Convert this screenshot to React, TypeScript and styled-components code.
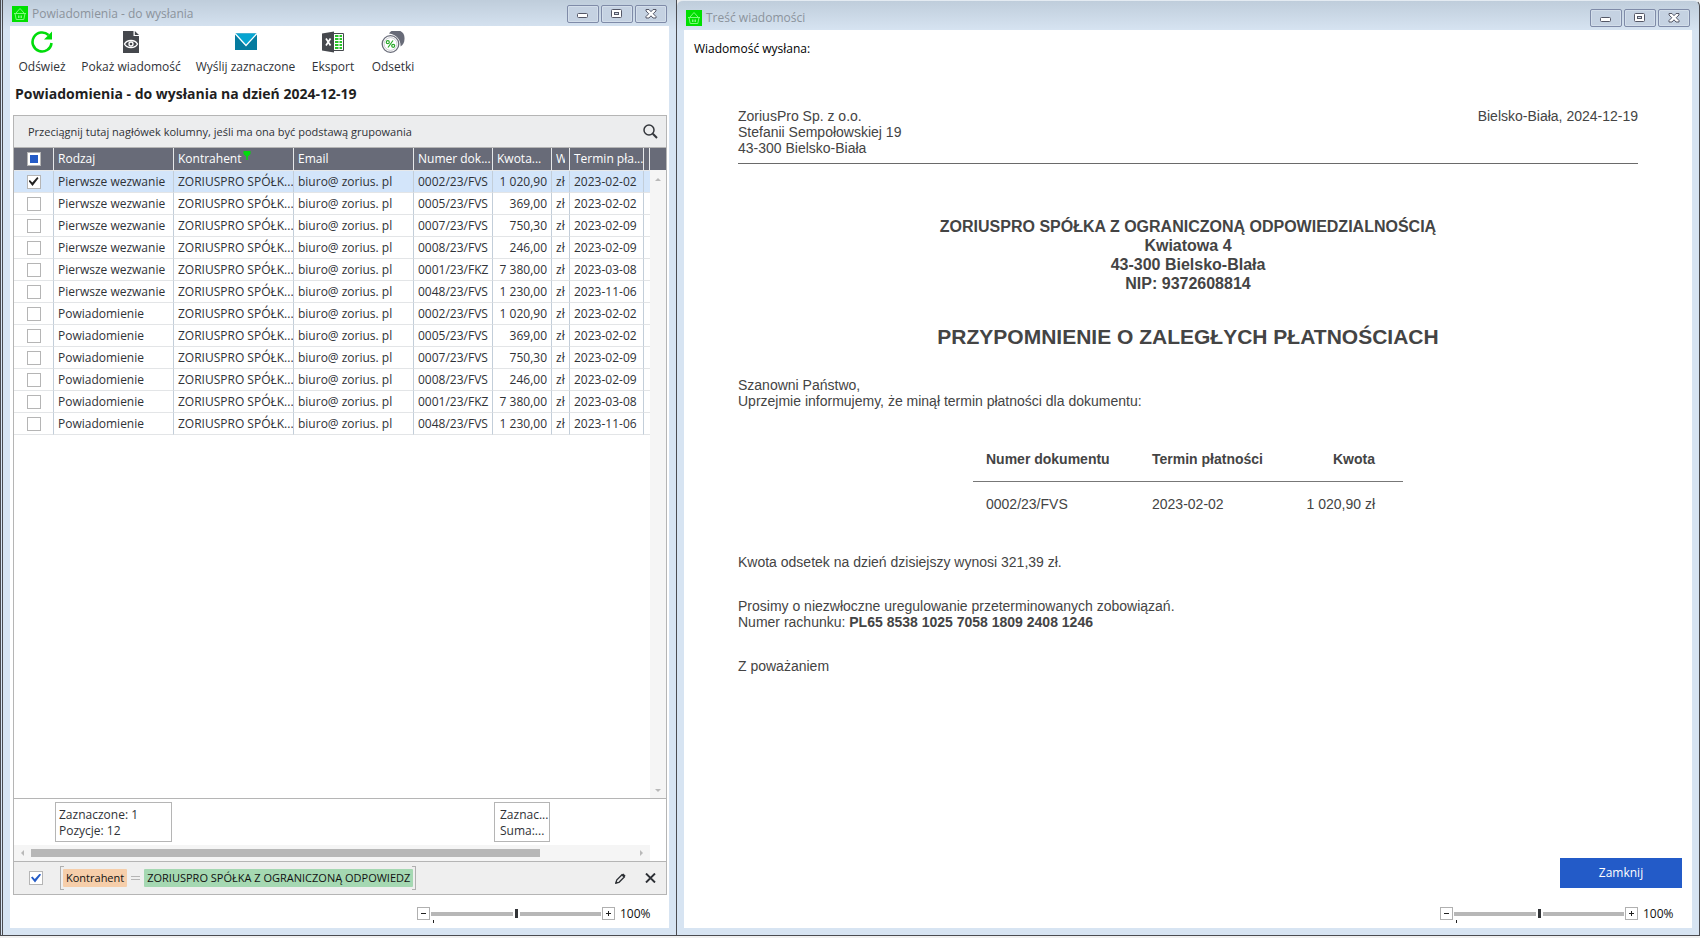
import React, { useEffect, useRef, useState } from 'react';
import styled, { createGlobalStyle, css } from 'styled-components';

const GlobalStyle = createGlobalStyle`
  *, *::before, *::after { box-sizing: border-box; }
  html, body { margin: 0; background: #f0f0f0; }
  body, button, input, table {
    font-family: "Open Sans", "Noto Sans", sans-serif;
    font-size: 12px;
    line-height: 16px;
    color: #2f3237;
  }
  button { padding: 0; border: 0; background: none; }
  p, h1, h2 { margin: 0; }
  svg { display: block; }
`;

const Desktop = styled.main`
  display: grid;
  grid-template-columns: minmax(0, 677fr) minmax(0, 1023fr);
  min-height: 100vh;
  padding-bottom: 2px;
  background: #f0f0f0;
`;

const Window = styled.section<{ $first?: boolean }>`
  display: flex;
  flex-direction: column;
  min-width: 0;
  padding: 0 7px 7px;
  border-bottom: 1px solid #4a4b50;
  border-right: 1px solid #4a4b50;
  background: linear-gradient(#bfcddb 0, #d7e4f2 30px);
  ${(p) =>
    p.$first
      ? css`
          border-left: 3px double #4a4b50;
        `
      : css`
          border-top: 1px solid #e4ebf2;
          border-top-left-radius: 6px;
          border-top-right-radius: 6px;
        `}
`;

const TitleBar = styled.header<{ $tall?: boolean }>`
  display: flex;
  align-items: center;
  gap: 4px;
  height: ${(p) => (p.$tall ? 29 : 26)}px;
  padding: ${(p) => (p.$tall ? '5px 2px 0' : '2px 2px 0')};
`;

const Title = styled.span`
  flex: 1;
  color: #8b939c;
`;

const WindowButtons = styled.div`
  display: flex;
  gap: 2px;
`;

const WindowButton = styled.button`
  display: grid;
  place-items: center;
  width: 32px;
  height: 18px;
  border: 1px solid #7f8ba8;
  border-radius: 2px;
  background: #c5d2e2;
  box-shadow: inset 0 0 0 1px #d3deea;
`;

const Client = styled.div`
  display: flex;
  flex: 1;
  flex-direction: column;
  background: #fff;
`;

const Toolbar = styled.nav`
  display: flex;
  gap: 20px;
  padding: 5px 10px 0;
`;

const ToolButton = styled.button<{ $width: number }>`
  display: flex;
  flex-direction: column;
  align-items: center;
  gap: 6px;
  width: ${(p) => p.$width}px;
  white-space: nowrap;
`;

const Heading = styled.h1`
  padding: 11px 5px 13px;
  font-size: 14px;
  line-height: 16px;
  color: #1f1f1f;
`;

const GridPanel = styled.div`
  display: flex;
  flex: 1;
  flex-direction: column;
  margin: 0 2px 0 3px;
  border: 1px solid #b5b5b5;
`;

const GroupPanel = styled.div`
  display: flex;
  align-items: center;
  justify-content: space-between;
  height: 32px;
  padding: 0 8px 0 14px;
  border-bottom: 1px solid #b5b5b5;
  background: #ecedee;
  font-size: 11px;
`;

const GridBody = styled.div`
  display: grid;
  grid-template-columns: minmax(0, 1fr) 16px;
  flex: 1;
`;

const Table = styled.table`
  width: 100%;
  align-self: start;
  table-layout: fixed;
  border-collapse: separate;
  border-spacing: 0;
`;

const HeadCell = styled.th<{ $check?: boolean }>`
  height: 23px;
  padding: ${(p) => (p.$check ? '0' : '0 0 0 4px')};
  border-right: 1px solid #e6e8ea;
  border-bottom: 1px solid #e6e8ea;
  background: #686b78;
  color: #fff;
  font-weight: 400;
  text-align: left;
  white-space: nowrap;
  overflow: hidden;
`;

const HeadLabel = styled.span`
  display: flex;
  gap: 1px;
  margin-right: 4px;
  overflow: hidden;
`;

const Row = styled.tr<{ $selected?: boolean }>`
  background: ${(p) => (p.$selected ? '#d3e5fa' : '#fff')};
`;

const Cell = styled.td<{ $right?: boolean; $check?: boolean }>`
  height: 22px;
  padding: ${(p) => (p.$check ? '0' : '0 4px')};
  border-right: 1px solid #c3ced9;
  border-bottom: 1px solid #e3e5e7;
  text-align: ${(p) => (p.$right ? 'right' : 'left')};
  white-space: nowrap;
  overflow: hidden;
  &:last-child { border-right: 0; }
`;

const CheckWrap = styled.label`
  display: grid;
  place-items: center;
`;

const CheckBox = styled.input<{ $accent?: string }>`
  appearance: none;
  display: grid;
  place-items: center;
  width: 14px;
  height: 14px;
  margin: 0;
  border: 1px solid #b5b5b5;
  background: #fff;
  &:checked::after {
    content: '';
    width: 10px;
    height: 9px;
    background: ${(p) => p.$accent ?? '#222'};
    clip-path: polygon(0 45%, 14% 32%, 38% 62%, 88% 0, 100% 14%, 40% 100%);
  }
  &:indeterminate::after {
    content: '';
    width: 8px;
    height: 8px;
    background: #245bc7;
    clip-path: none;
  }
`;

const VScroll = styled.div`
  display: flex;
  flex-direction: column;
  justify-content: space-between;
  align-items: center;
  padding-bottom: 6px;
  background: #f5f5f5;
`;

const VScrollTop = styled.div`
  align-self: stretch;
  display: grid;
  justify-items: center;
  row-gap: 8px;
  &::before {
    content: '';
    width: 100%;
    height: 22px;
    background: #686b78;
  }
`;

const Arrow = styled.i<{ $dir: 'up' | 'down' | 'left' | 'right' }>`
  width: ${(p) => (p.$dir === 'up' || p.$dir === 'down' ? 6 : 3)}px;
  height: ${(p) => (p.$dir === 'up' || p.$dir === 'down' ? 3 : 6)}px;
  background: #b9b9b9;
  clip-path: ${(p) =>
    ({
      up: 'polygon(50% 0, 100% 100%, 0 100%)',
      down: 'polygon(0 0, 100% 0, 50% 100%)',
      left: 'polygon(0 50%, 100% 0, 100% 100%)',
      right: 'polygon(0 0, 100% 50%, 0 100%)',
    })[p.$dir]};
`;

const Summary = styled.div`
  display: grid;
  grid-template-columns: 117px 56px;
  column-gap: 322px;
  padding: 3px 0 3px 41px;
  border-top: 1px solid #b5b5b5;
`;

const SummaryBox = styled.div<{ $inset?: boolean }>`
  height: 40px;
  padding: ${(p) => (p.$inset ? '4px 0 2px 5px' : '4px 0 2px 3px')};
  border: 1px solid #b5b5b5;
  white-space: nowrap;
  overflow: hidden;
`;

const HScroll = styled.div`
  display: flex;
  align-items: center;
  height: 16px;
  margin-right: 16px;
  padding: 0 7px;
  background: #f5f5f5;
`;

const HThumb = styled.div`
  flex: 0 1 509px;
  height: 8px;
  margin: 0 auto 0 7px;
  background: #b7b7b7;
`;

const FilterPanel = styled.div`
  display: flex;
  align-items: center;
  height: 33px;
  padding: 0 10px 0 15px;
  border-top: 1px solid #b5b5b5;
  background: #efefef;
`;

const FilterExpression = styled.div`
  position: relative;
  display: flex;
  align-items: center;
  gap: 4px;
  height: 24px;
  margin: 0 auto 0 17px;
  padding: 0 3px;
  &::before, &::after {
    content: '';
    position: absolute;
    top: 0;
    bottom: 0;
    width: 4px;
    border: 1px solid #b0b0b0;
  }
  &::before { left: 0; border-right: 0; }
  &::after { right: 0; border-left: 0; }
`;

const Chip = styled.span<{ $tone: string }>`
  height: 18px;
  padding: 1px 3px;
  border-radius: 1px;
  background: ${(p) => p.$tone};
  color: #111;
  font-size: 11px;
  white-space: nowrap;
`;

const Equals = styled.i`
  width: 9px;
  height: 4px;
  border: solid #b5b5b5;
  border-width: 1px 0;
`;

const FilterActions = styled.div`
  display: flex;
  align-items: center;
  gap: 19px;
`;

const ZoomRow = styled.footer`
  display: flex;
  align-items: center;
  justify-content: flex-end;
  height: 33px;
  padding: 4px 20px 0 0;
`;

const ZoomButton = styled.button`
  display: grid;
  place-items: center;
  width: 13px;
  height: 13px;
  border: 1px solid #b0b0b0;
`;

const ZoomTrack = styled.label`
  position: relative;
  display: flex;
  width: 172px;
  padding: 0 1px;
  &::after {
    content: '';
    position: absolute;
    left: 3px;
    top: 13px;
    width: 1px;
    height: 3px;
    background: #222;
  }
`;

const Range = styled.input`
  appearance: none;
  width: 100%;
  height: 13px;
  margin: 0;
  background: linear-gradient(#b7b7b7, #b7b7b7) center / 100% 4px no-repeat;
  &::-webkit-slider-thumb {
    appearance: none;
    width: 3px;
    height: 9px;
    background: #333538;
    box-shadow: 0 0 0 2px #fff;
  }
`;

const ZoomValue = styled.output`
  width: 29px;
  margin-left: 5px;
  color: #111;
  white-space: nowrap;
`;

const Status = styled.p`
  padding: 11px 10px 0;
  color: #000;
`;

const Letter = styled.article`
  flex: 1;
  padding: 51px 54px 0;
  font: 14px/16px "Liberation Sans", Arial, sans-serif;
  color: #444;
`;

const LetterHead = styled.div`
  display: flex;
  justify-content: space-between;
  padding-bottom: 7px;
  border-bottom: 1px solid #6a6a6a;
`;

const Recipient = styled.p`
  margin-top: 53px;
  font-size: 16px;
  line-height: 19px;
  font-weight: 700;
  text-align: center;
`;

const LetterTitle = styled.h2`
  margin: 32px 0 28px;
  font-size: 21px;
  line-height: 24px;
  text-align: center;
`;

const Paragraph = styled.p`
  margin-bottom: 28px;
`;

const DebtTable = styled.table`
  width: 430px;
  margin: 0 auto 28px;
  table-layout: fixed;
  border-collapse: collapse;
  font: inherit;
  color: inherit;
  th, td {
    height: 45px;
    padding: 0 0 0 13px;
    text-align: left;
  }
  th {
    height: 44px;
    border-bottom: 1px solid #777;
  }
  th:last-child, td:last-child {
    padding: 0 28px 0 0;
    text-align: right;
  }
`;

const ActionRow = styled.div`
  display: flex;
  justify-content: flex-end;
  padding: 0 10px 7px;
`;

const CloseButton = styled.button`
  width: 122px;
  height: 30px;
  background: #235bc8;
  color: #fff;
`;

const BasketIcon = () => (
  <svg width="16" height="16" viewBox="0 0 16 16" aria-hidden="true">
    <rect width="16" height="16" fill="#00e000" />
    <g fill="none" stroke="#7dfa7d" strokeWidth="1">
      <path d="M2 7.5h12M3 7.5l1.2 6h7.6l1.2-6M4 7l4-4.5L12 7M6.5 9.5v2.5M8 9.5v2.5M9.5 9.5v2.5" />
    </g>
  </svg>
);

const MinimizeIcon = () => (
  <svg width="12" height="12" viewBox="0 0 12 12" aria-hidden="true">
    <rect x="0.5" y="5.5" width="10" height="4" rx="1" fill="#fff" stroke="#545766" />
  </svg>
);

const MaximizeIcon = () => (
  <svg width="12" height="12" viewBox="0 0 12 12" aria-hidden="true">
    <rect x="0.5" y="1.5" width="10" height="8" rx="1" fill="#fff" stroke="#545766" />
    <rect x="3.5" y="4.5" width="4" height="2" fill="#d0dae6" stroke="#545766" />
  </svg>
);

const CloseIcon = () => (
  <svg width="12" height="12" viewBox="0 0 12 12" aria-hidden="true">
    <path
      d="M1 1.5h3L6 3.7l2-2.2h3v1.5L8.2 5.7 11 8.5V10H8L6 7.8 4 10H1V8.5l2.800-2.800L1 3z"
      fill="#fff"
      stroke="#545766"
    />
  </svg>
);

const RefreshIcon = () => (
  <svg width="22" height="22" viewBox="0 0 22 22" aria-hidden="true">
    <path d="M20.5 12A9.500 9.500 0 1 1 17.500 4" fill="none" stroke="#00dc0a" strokeWidth="2.6" />
    <path d="M21 0.5v8h-8z" fill="#00dc0a" />
  </svg>
);

const PreviewIcon = () => (
  <svg width="22" height="22" viewBox="0 0 22 22" aria-hidden="true">
    <path d="M3 0h10.500v5H19v17H3z" fill="#45484d" />
    <path d="M14.800 0L19 4h-4.200z" fill="#45484d" />
    <path d="M4.500 13c2.500-4.700 10.500-4.700 13 0-2.500 4.700-10.500 4.700-13 0z" fill="none" stroke="#fff" strokeWidth="1.4" />
    <circle cx="11" cy="13" r="2" fill="none" stroke="#fff" strokeWidth="1.3" />
  </svg>
);

const MailIcon = () => (
  <svg width="22" height="22" viewBox="0 0 22 22" aria-hidden="true">
    <path d="M0 2.500h22v16.500H0z" fill="#057b9f" />
    <path d="M0 2.500h22L11 14z" fill="#06a5d1" />
    <path d="M0 2.500l11 12 11-12" fill="none" stroke="#fff" strokeWidth="1.3" />
  </svg>
);

const ExcelIcon = () => (
  <svg width="22" height="22" viewBox="0 0 22 22" aria-hidden="true">
    <path d="M11 2.500h10.500v17H11" fill="#fff" stroke="#45484d" />
    <path d="M0 2.500L12 0.500v21L0 19.500z" fill="#45484d" />
    <path d="M4 7.500l4.500 7M8.500 7.500l-4.500 7" stroke="#fff" strokeWidth="1.7" fill="none" />
    <path
      d="M13 5h3.500M17.500 5H20M13 8h3.500M17.500 8H20M13 11h3.500M17.500 11H20M13 14h3.500M17.500 14H20M13 17h3.500M17.500 17H20"
      stroke="#2ac42a"
      strokeWidth="2"
    />
  </svg>
);

const InterestIcon = () => (
  <svg width="24" height="22" viewBox="0 0 24 22" aria-hidden="true">
    <path d="M8 2.600A8.500 8.500 0 0 1 23.500 8c0 3.500-1.500 6-4 7.600.6-5.800-3.500-12-11.500-13z" fill="#686b78" />
    <circle cx="9.500" cy="13" r="8.300" fill="#fff" stroke="#686b78" strokeWidth="1.300" />
    <circle cx="9.500" cy="13" r="6.400" fill="none" stroke="#b5b7be" strokeWidth="0.700" />
    <g fill="none" stroke="#27a827" strokeWidth="1.200">
      <path d="M12 9.500L7 16.500" />
      <circle cx="6.800" cy="11.200" r="1.500" />
      <circle cx="12.200" cy="14.800" r="1.500" />
    </g>
  </svg>
);

const SearchIcon = () => (
  <svg width="15" height="15" viewBox="0 0 15 15" fill="none" stroke="#34373c" aria-hidden="true">
    <circle cx="6" cy="6" r="5" strokeWidth="1.5" />
    <path d="M9.800 9.800l4.200 4.200" strokeWidth="2" />
  </svg>
);

const FilterIcon = () => (
  <svg width="8" height="9" viewBox="0 0 8 9" aria-hidden="true">
    <path d="M0.500 0h7v3L4.800 5.500V9H3.300V5.500L0.500 3z" fill="#00dc0a" />
  </svg>
);

const PencilIcon = () => (
  <svg width="11" height="11" viewBox="0 0 11 11" aria-hidden="true">
    <path d="M1 10l.7-3L7 1.700l2.300 2.300L4 9.300z" fill="none" stroke="#2d3035" strokeWidth="1.3" />
    <path d="M6.500 2L8.300.4l2.300 2.300L9 4.500z" fill="#2d3035" />
    <path d="M0 11l1-3 2 2z" fill="#2d3035" />
  </svg>
);

const CrossIcon = () => (
  <svg width="11" height="10" viewBox="0 0 11 10" aria-hidden="true">
    <path d="M1 .5l9 9M10 .5l-9 9" stroke="#2d3035" strokeWidth="1.9" />
  </svg>
);

const MinusIcon = () => (
  <svg width="7" height="7" viewBox="0 0 7 7" aria-hidden="true">
    <path d="M1 3.500h5" stroke="#222" />
  </svg>
);

const PlusIcon = () => (
  <svg width="7" height="7" viewBox="0 0 7 7" aria-hidden="true">
    <path d="M1 3.500h5M3.500 1v5" stroke="#222" />
  </svg>
);

const WindowTitle = ({ text, tall }: { text: string; tall?: boolean }) => (
  <TitleBar $tall={tall}>
    <BasketIcon />
    <Title>{text}</Title>
    <WindowButtons>
      <WindowButton aria-label="Minimalizuj"><MinimizeIcon /></WindowButton>
      <WindowButton aria-label="Maksymalizuj"><MaximizeIcon /></WindowButton>
      <WindowButton aria-label="Zamknij okno"><CloseIcon /></WindowButton>
    </WindowButtons>
  </TitleBar>
);

const ZoomBar = () => {
  const [level, setLevel] = useState(100);
  return (
    <ZoomRow>
      <ZoomButton aria-label="Pomniejsz" onClick={() => setLevel(Math.max(0, level - 10))}><MinusIcon /></ZoomButton>
      <ZoomTrack>
        <Range
          type="range"
          aria-label="Powiększenie"
          min={0}
          max={200}
          value={level}
          onChange={(e) => setLevel(Number(e.target.value))}
        />
      </ZoomTrack>
      <ZoomButton aria-label="Powiększ" onClick={() => setLevel(Math.min(200, level + 10))}><PlusIcon /></ZoomButton>
      <ZoomValue>{level}%</ZoomValue>
    </ZoomRow>
  );
};

const tools = [
  { label: 'Odśwież', width: 44, Icon: RefreshIcon },
  { label: 'Pokaż wiadomość', width: 94, Icon: PreviewIcon },
  { label: 'Wyślij zaznaczone', width: 95, Icon: MailIcon },
  { label: 'Eksport', width: 40, Icon: ExcelIcon },
  { label: 'Odsetki', width: 40, Icon: InterestIcon },
];

const documents = [
  ['0002/23/FVS', '1 020,90', '2023-02-02'],
  ['0005/23/FVS', '369,00', '2023-02-02'],
  ['0007/23/FVS', '750,30', '2023-02-09'],
  ['0008/23/FVS', '246,00', '2023-02-09'],
  ['0001/23/FKZ', '7 380,00', '2023-03-08'],
  ['0048/23/FVS', '1 230,00', '2023-11-06'],
];

const notices = ['Pierwsze wezwanie', 'Powiadomienie'].flatMap((kind) =>
  documents.map(([number, amount, due]) => ({ kind, number, amount, due })),
);

const columnWidths = [40, 120, 120, 120, 79, 59, 18, 74];

const NoticeTable = () => {
  const [checked, setChecked] = useState<number[]>([0]);
  const master = useRef<HTMLInputElement>(null);
  const all = checked.length === notices.length;

  useEffect(() => {
    if (master.current) master.current.indeterminate = checked.length > 0 && !all;
  }, [checked, all]);

  const toggle = (i: number) =>
    setChecked((prev) => (prev.includes(i) ? prev.filter((n) => n !== i) : [...prev, i]));

  return (
    <Table>
      <colgroup>
        {columnWidths.map((width, i) => <col key={i} width={width} />)}
        <col />
      </colgroup>
      <thead>
        <tr>
          <HeadCell $check>
            <CheckWrap>
              <CheckBox
                ref={master}
                type="checkbox"
                aria-label="Zaznacz wszystkie"
                checked={all}
                onChange={() => setChecked(all ? [] : notices.map((_, i) => i))}
              />
            </CheckWrap>
          </HeadCell>
          <HeadCell>Rodzaj</HeadCell>
          <HeadCell><HeadLabel>Kontrahent<FilterIcon /></HeadLabel></HeadCell>
          <HeadCell>Email</HeadCell>
          <HeadCell>Numer dok...</HeadCell>
          <HeadCell>Kwota...</HeadCell>
          <HeadCell><HeadLabel>W</HeadLabel></HeadCell>
          <HeadCell>Termin pła...</HeadCell>
          <HeadCell />
        </tr>
      </thead>
      <tbody>
        {notices.map((n, i) => (
          <Row key={i} $selected={i === 0}>
            <Cell $check>
              <CheckWrap>
                <CheckBox
                  type="checkbox"
                  aria-label={`${n.kind} ${n.number}`}
                  checked={checked.includes(i)}
                  onChange={() => toggle(i)}
                />
              </CheckWrap>
            </Cell>
            <Cell>{n.kind}</Cell>
            <Cell>ZORIUSPRO SPÓŁK...</Cell>
            <Cell>biuro@ zorius. pl</Cell>
            <Cell>{n.number}</Cell>
            <Cell $right>{n.amount}</Cell>
            <Cell>zł</Cell>
            <Cell>{n.due}</Cell>
            <Cell />
          </Row>
        ))}
      </tbody>
    </Table>
  );
};

const NoticesWindow = () => (
  <Window $first>
    <WindowTitle text="Powiadomienia - do wysłania" />
    <Client>
      <Toolbar>
        {tools.map(({ label, width, Icon }) => (
          <ToolButton key={label} $width={width}>
            <Icon />
            {label}
          </ToolButton>
        ))}
      </Toolbar>
      <Heading>Powiadomienia - do wysłania na dzień 2024-12-19</Heading>
      <GridPanel>
        <GroupPanel>
          Przeciągnij tutaj nagłówek kolumny, jeśli ma ona być podstawą grupowania
          <button aria-label="Szukaj"><SearchIcon /></button>
        </GroupPanel>
        <GridBody>
          <NoticeTable />
          <VScroll>
            <VScrollTop><Arrow $dir="up" /></VScrollTop>
            <Arrow $dir="down" />
          </VScroll>
        </GridBody>
        <Summary>
          <SummaryBox>Zaznaczone: 1<br />Pozycje: 12</SummaryBox>
          <SummaryBox $inset>Zaznac...<br />Suma:...</SummaryBox>
        </Summary>
        <HScroll>
          <Arrow $dir="left" />
          <HThumb />
          <Arrow $dir="right" />
        </HScroll>
        <FilterPanel>
          <CheckBox type="checkbox" aria-label="Filtr aktywny" defaultChecked $accent="#245bc7" />
          <FilterExpression>
            <Chip $tone="#f6ceaa">Kontrahent</Chip>
            <Equals />
            <Chip $tone="#a5d8b2">ZORIUSPRO SPÓŁKA Z OGRANICZONĄ ODPOWIEDZ</Chip>
          </FilterExpression>
          <FilterActions>
            <button aria-label="Edytuj filtr"><PencilIcon /></button>
            <button aria-label="Usuń filtr"><CrossIcon /></button>
          </FilterActions>
        </FilterPanel>
      </GridPanel>
      <ZoomBar />
    </Client>
  </Window>
);

const MessageWindow = () => (
  <Window>
    <WindowTitle text="Treść wiadomości" tall />
    <Client>
      <Status>Wiadomość wysłana:</Status>
      <Letter>
        <LetterHead>
          <p>ZoriusPro Sp. z o.o.<br />Stefanii Sempołowskiej 19<br />43-300 Bielsko-Biała</p>
          <p>Bielsko-Biała, 2024-12-19</p>
        </LetterHead>
        <Recipient>
          ZORIUSPRO SPÓŁKA Z OGRANICZONĄ ODPOWIEDZIALNOŚCIĄ<br />
          Kwiatowa 4<br />
          43-300 Bielsko-BIała<br />
          NIP: 9372608814
        </Recipient>
        <LetterTitle>PRZYPOMNIENIE O ZALEGŁYCH PŁATNOŚCIACH</LetterTitle>
        <Paragraph>
          Szanowni Państwo,<br />
          Uprzejmie informujemy, że minął termin płatności dla dokumentu:
        </Paragraph>
        <DebtTable>
          <colgroup>
            <col width={166} />
            <col width={140} />
            <col />
          </colgroup>
          <thead>
            <tr><th>Numer dokumentu</th><th>Termin płatności</th><th>Kwota</th></tr>
          </thead>
          <tbody>
            <tr><td>0002/23/FVS</td><td>2023-02-02</td><td>1 020,90 zł</td></tr>
          </tbody>
        </DebtTable>
        <Paragraph>Kwota odsetek na dzień dzisiejszy wynosi 321,39 zł.</Paragraph>
        <Paragraph>
          Prosimy o niezwłoczne uregulowanie przeterminowanych zobowiązań.<br />
          Numer rachunku: <b>PL65 8538 1025 7058 1809 2408 1246</b>
        </Paragraph>
        <Paragraph>Z poważaniem</Paragraph>
      </Letter>
      <ActionRow><CloseButton>Zamknij</CloseButton></ActionRow>
      <ZoomBar />
    </Client>
  </Window>
);

export default function App() {
  return (
    <>
      <GlobalStyle />
      <Desktop>
        <NoticesWindow />
        <MessageWindow />
      </Desktop>
    </>
  );
}
